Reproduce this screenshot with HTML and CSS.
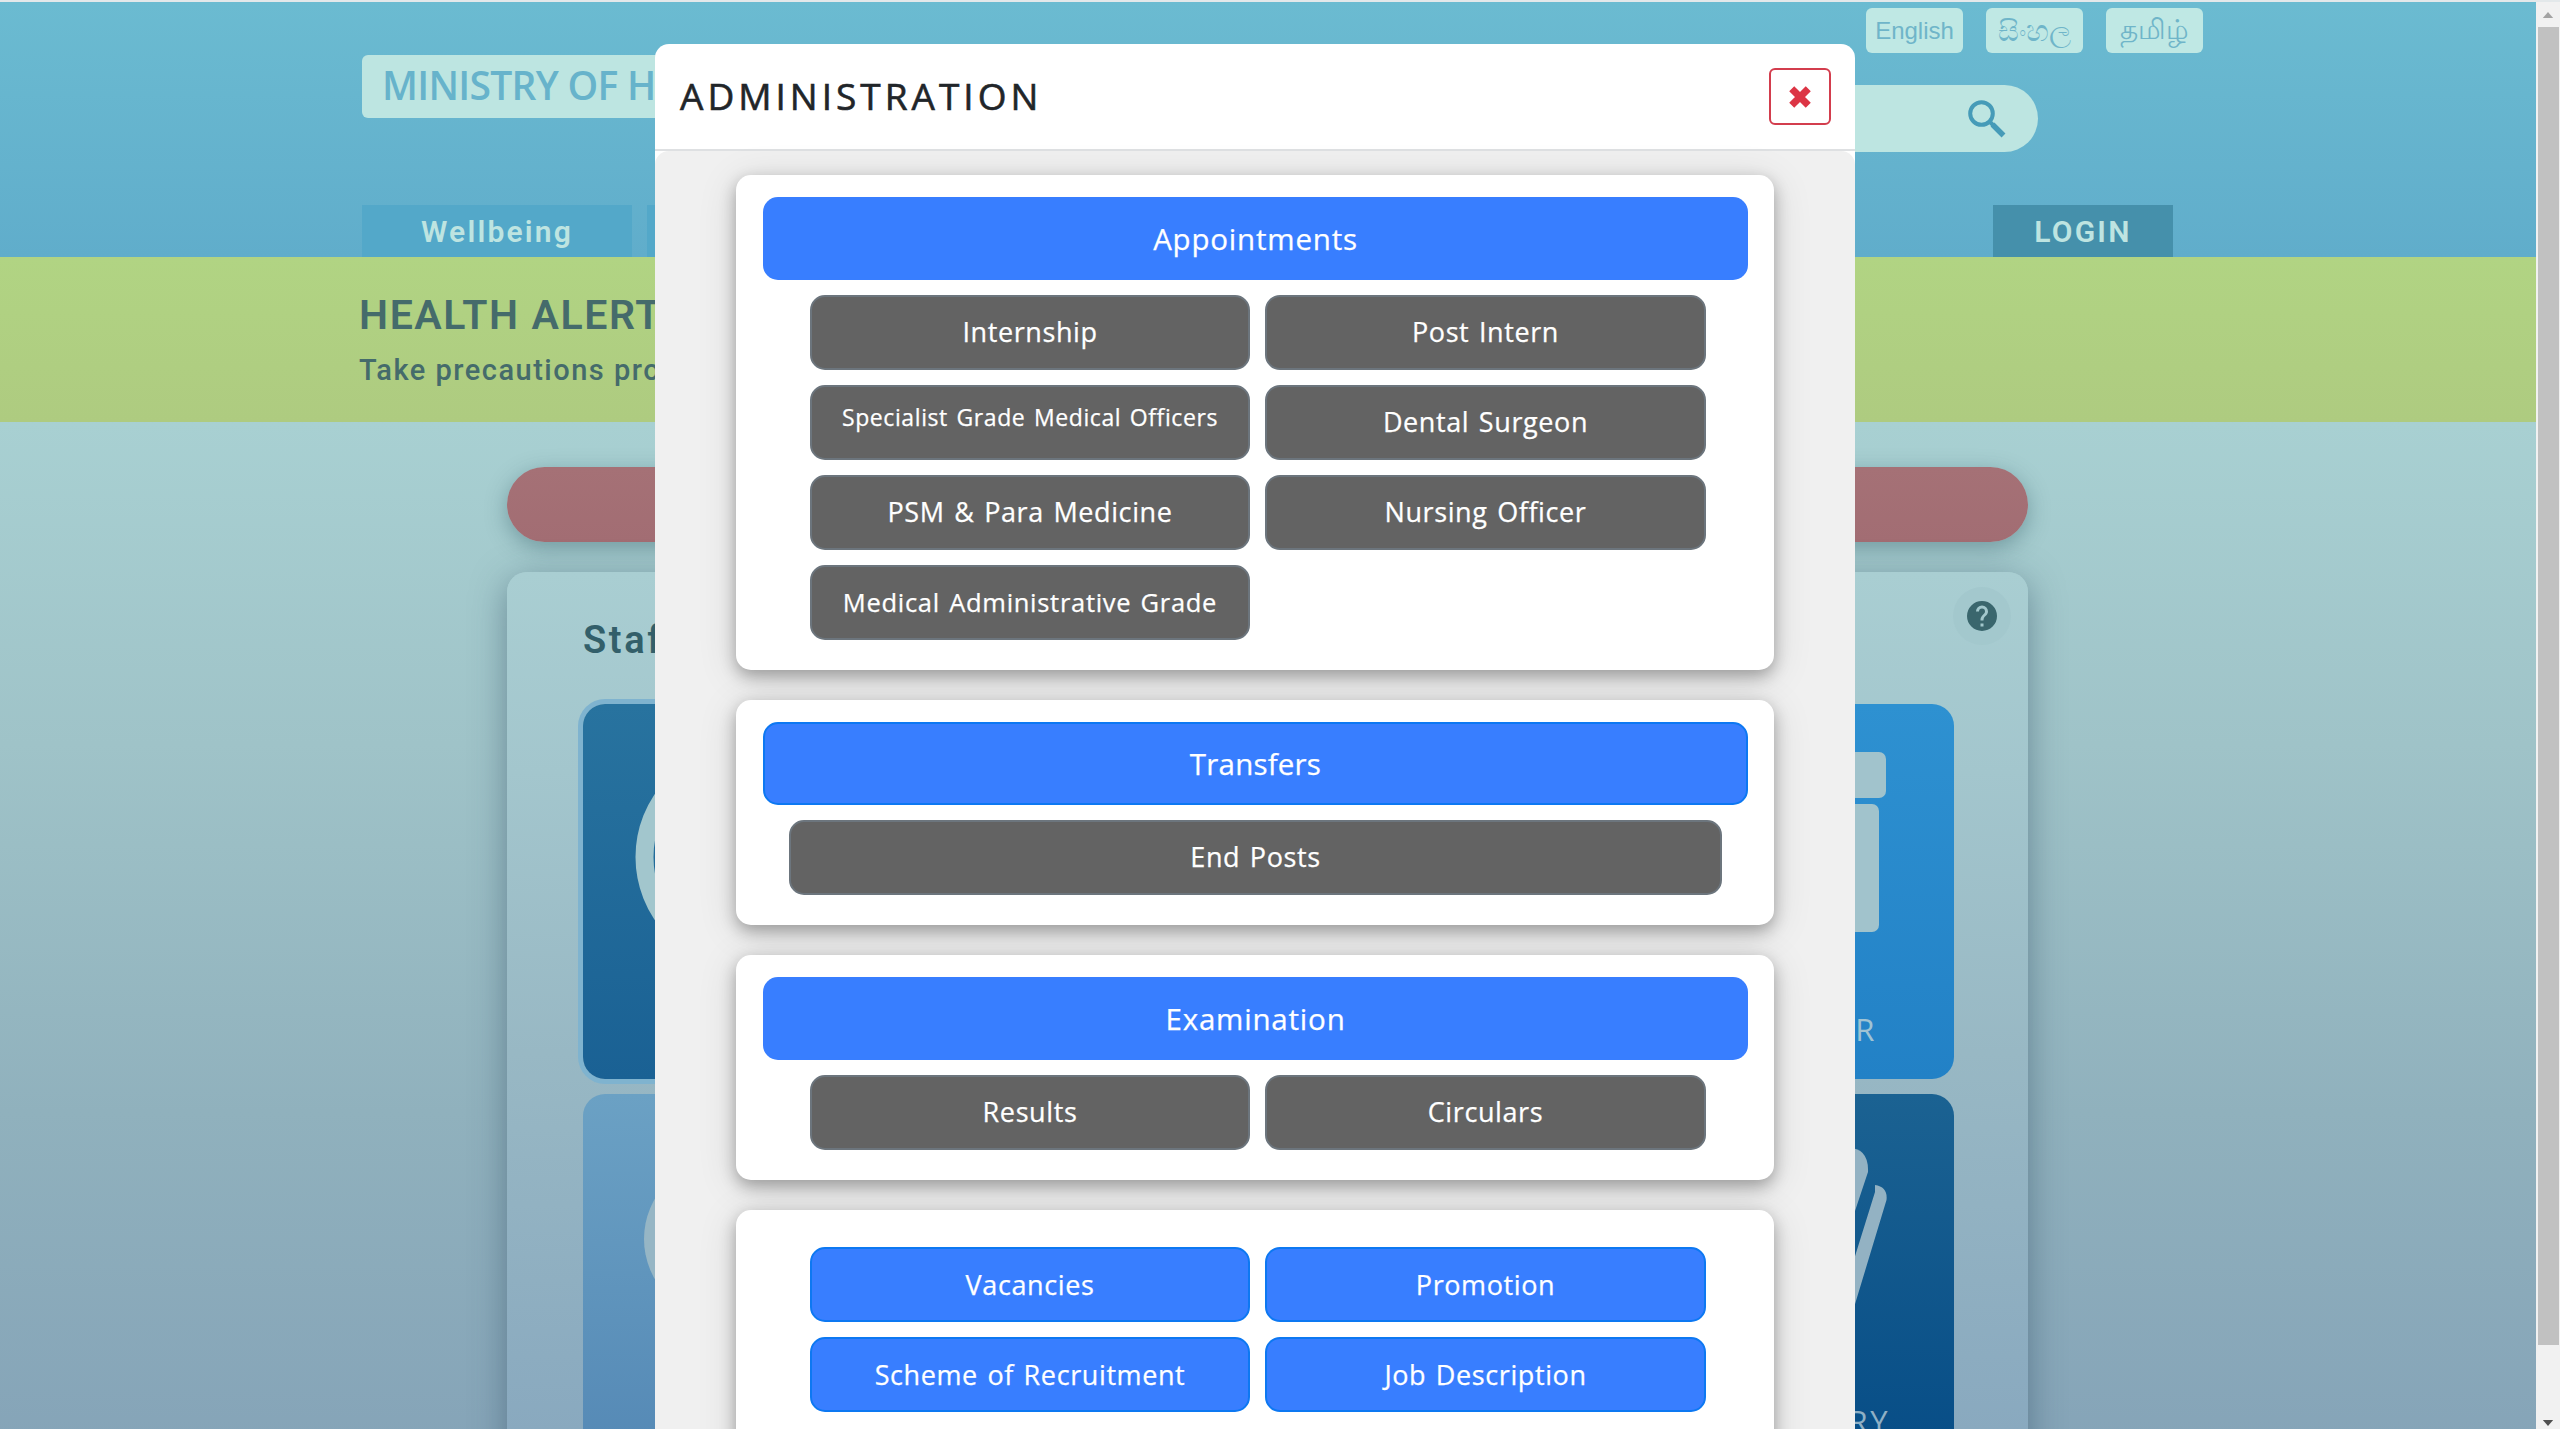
FILE: index.html
```html
<!DOCTYPE html>
<html lang="en">
<head>
<meta charset="utf-8">
<title>Ministry of Health</title>
<link rel="stylesheet" href="styles.css">
</head>
<body>
<div class="page">
  <header class="header">
    <div class="languages"><span class="lang lang-en">English</span><span class="lang lang-si">සිංහල</span><span class="lang lang-ta">தமிழ்</span></div>
    <div class="brand-row">
      <div class="brand">MINISTRY OF HEALTH</div>
      <div class="search"><svg viewBox="0 0 38 38"><circle cx="13.5" cy="13.5" r="11.3" fill="none" stroke-width="4"/><path d="M22.5 22.5l2.5 2.500" stroke-width="4"/><path d="M24.500 24.500l11 11" stroke-width="5.500"/></svg></div>
    </div>
    <nav class="tabs"><span class="tab">Wellbeing</span><span class="tab tab-rest"></span><span class="tab login">LOGIN</span></nav>
  </header>
  <section class="alert">
    <h2>HEALTH ALERTS</h2>
    <p>Take precautions provided</p>
  </section>
  <main class="content">
    <div class="notice"></div>
    <section class="panel">
      <div class="panel-head"><h3>Staff</h3><span class="help"><svg viewBox="0 0 24 24"><path d="M12 2a10 10 0 1 0 0 20 10 10 0 0 0 0-20zm1 17h-2v-2h2v2zm2.07-7.75-.9.92C13.45 12.9 13 13.5 13 15h-2v-.5c0-1.1.45-2.1 1.17-2.83l1.24-1.26c.37-.36.59-.86.59-1.41a2 2 0 1 0-4 0H8a4 4 0 1 1 8 0c0 .88-.36 1.68-.93 2.25z"/></svg></span></div>
      <div class="tiles">
        <div class="tile tile-navy tile-active"><svg class="tile-art" viewBox="0 0 450 375"><circle cx="165" cy="153" r="103.5" fill="none" stroke="currentColor" stroke-width="18"/></svg></div>
        <div class="tile tile-blue"><svg class="tile-art" viewBox="0 0 450 375"><rect x="180" y="48" width="202" height="46" rx="7"/><rect x="187" y="100" width="188" height="128" rx="7"/></svg><span class="tile-label">CALENDAR</span></div>
        <div class="tile tile-light"><svg class="tile-art" viewBox="0 0 450 375"><circle cx="141" cy="145" r="80"/></svg></div>
        <div class="tile tile-dark"><svg class="tile-art" viewBox="0 0 450 375"><path d="M340 54q25-2 24 24L330 180V60z"/><path d="M371 91q13 2 11.500 15L345 230l-12-10L371 98z"/></svg><span class="tile-label">DIRECTORY</span></div>
      </div>
    </section>
  </main>
</div>

<div class="modal" role="dialog">
  <div class="modal-head"><h1>ADMINISTRATION</h1><button class="close"><svg viewBox="0 0 22 22"><path d="M4.500 4.500l13 13M17.500 4.500l-13 13"/></svg></button></div>
  <div class="modal-body">
    <section class="card">
      <div class="title">Appointments</div>
      <div class="grid">
        <div class="btn">Internship</div><div class="btn">Post Intern</div>
        <div class="btn btn-small">Specialist Grade Medical Officers</div><div class="btn">Dental Surgeon</div>
        <div class="btn">PSM &amp; Para Medicine</div><div class="btn">Nursing Officer</div>
        <div class="btn btn-medium">Medical Administrative Grade</div>
      </div>
    </section>
    <section class="card">
      <div class="title title-edged">Transfers</div>
      <div class="grid grid-single"><div class="btn">End Posts</div></div>
    </section>
    <section class="card">
      <div class="title">Examination</div>
      <div class="grid"><div class="btn">Results</div><div class="btn">Circulars</div></div>
    </section>
    <section class="card card-links">
      <div class="grid">
        <div class="btn btn-blue">Vacancies</div><div class="btn btn-blue">Promotion</div>
        <div class="btn btn-blue">Scheme of Recruitment</div><div class="btn btn-blue">Job Description</div>
      </div>
    </section>
  </div>
</div>

<div class="scrollbar"><svg class="arrow arrow-up" viewBox="0 0 12 7"><path d="M6 0l6 7H0z"/></svg><div class="thumb"></div><svg class="arrow arrow-down" viewBox="0 0 12 7"><path d="M0 0h12L6 7z"/></svg></div>
</body>
</html>
```
FILE: styles.css
```css
* { box-sizing: border-box; }
body { margin: 0; height: 1429px; overflow: hidden; position: relative; font-family: "Open Sans", "Noto Sans", sans-serif; background: #eef2f3; }
h1, h2, h3, p { margin: 0; }

.page { width: 2536px; height: 1427px; margin-top: 2px; display: flex; flex-direction: column; overflow: hidden; }
body::before { content: ""; display: block; height: 2px; margin-bottom: -2px; background: #e3e8ea; }

.header { height: 255px; flex: none; display: flex; flex-direction: column; background: linear-gradient(#6bbbd1, #60adcb); }
.languages { display: flex; gap: 23px; padding: 6px 0 0 1866px; height: 53px; }
.lang { width: 97px; height: 45px; border-radius: 6px; background: #bfe8e4; color: #6fb5c9; display: flex; align-items: center; justify-content: center; font-size: 24px; line-height: 45px; }
.lang-en { font-family: "Liberation Sans", sans-serif; }
.lang-si { font-size: 29px; padding-bottom: 2px; }
.lang-ta { font-size: 28px; padding-bottom: 4px; }
.brand-row { display: flex; height: 100px; padding-left: 362px; }
.brand { width: 440px; height: 63px; border-radius: 6px; background: #bde5e1; color: #67b3cb; padding-left: 20px; line-height: 60px; font-size: 39px; font-weight: 600; letter-spacing: -.7px; white-space: nowrap; }
.search { width: 400px; height: 67px; margin: 30px 0 0 836px; border-radius: 0 34px 34px 0; background: #bde5e1; display: flex; align-items: center; justify-content: flex-end; padding-right: 32px; }
.search svg { width: 38px; height: 38px; fill: none; stroke: #469bb8; }
.tabs { display: flex; height: 52px; margin: 50px 0 0 362px; gap: 15px; }
.tab { width: 270px; background: #53a8c9; color: #bee4e1; font: 600 30px/54px Roboto, sans-serif; letter-spacing: 2.2px; text-align: center; }
.tab-rest { width: 700px; }
.login { width: 180px; margin-left: 631px; background: #4590ab; }

.alert { height: 165px; flex: none; padding: 35px 0 0 359px; background: linear-gradient(#b1d483, #aecb80); color: #456b6b; white-space: nowrap; }
.alert h2 { font: 600 41px/47px Roboto, sans-serif; letter-spacing: 1.6px; }
.alert p { font: 500 29px/34px Roboto, sans-serif; letter-spacing: 1.5px; margin-top: 14px; }

.content { flex: 1; display: flex; flex-direction: column; gap: 30px; padding: 45px 508px 0 507px; background: linear-gradient(#a8d0d2, #9fc3c8 28%, #90b1bd 60%, #819fb6); }
.notice { height: 75px; flex: none; border-radius: 38px; background: linear-gradient(#a57176, #a26d73); box-shadow: 0 6px 22px rgba(40, 80, 90, .4); }
.panel { height: 1000px; flex: none; border-radius: 20px; padding: 32px 74px 0 76px; background: linear-gradient(#a9ced2, #a3c6cd 20%, #98b8c4 48%, #89a9bf 86%); box-shadow: 0 8px 34px rgba(50, 80, 100, .5); }
.panel-head { height: 100px; display: flex; justify-content: space-between; }
.panel-head h3 { color: #335f6a; font: 600 38px/72px Roboto, sans-serif; letter-spacing: 2.6px; }
.help { width: 58px; height: 58px; margin: -17px -57px 0 0; border-radius: 50%; background: #a3c8cd; display: flex; align-items: center; justify-content: center; }
.help svg { width: 36px; height: 36px; fill: #3a666d; }
.tiles { display: grid; grid-template-columns: 450px 450px; grid-auto-rows: 375px; row-gap: 15px; justify-content: space-between; }
.tile { border-radius: 22px; overflow: hidden; display: grid; }
.tile > * { grid-area: 1 / 1; }
.tile-art { width: 450px; height: 375px; }
.tile-active { box-shadow: 0 0 0 5px #7fb3cf; }
.tile-navy { background: linear-gradient(#28739f, #1a6194); color: #a2c6cd; }
.tile-blue { background: linear-gradient(#2e91d1, #2281c6); fill: #a1c3cc; }
.tile-light { background: linear-gradient(#6ba1c4, #5488b5); fill: #96b6c5; }
.tile-dark { background: linear-gradient(#1b6292, #064c86); fill: #93b2c3; }
.tile-label { justify-self: end; align-self: end; font-size: 31px; line-height: 42px; letter-spacing: 2.5px; color: #a0c3d3; padding: 0 77px 29px 0; }
.tile-dark .tile-label { padding: 0 64px 27px 0; color: #8fb0c5; }

.modal { position: absolute; left: 655px; top: 44px; width: 1200px; height: 1385px; background: #fff; border-radius: 14px 14px 0 0; overflow: hidden; display: flex; flex-direction: column; }
.modal-head { height: 107px; flex: none; display: flex; align-items: center; justify-content: space-between; padding: 0 24px 0 25px; border-bottom: 2px solid #dee0e2; }
.modal-head h1 { font-size: 37px; font-weight: 400; -webkit-text-stroke: .6px; color: #212529; letter-spacing: 4px; padding-bottom: 2px; }
.close { width: 62px; height: 57px; border: 2px solid #d33d4d; border-radius: 6px; background: #fff; padding: 0; display: flex; align-items: center; justify-content: center; }
.close svg { width: 28px; height: 28px; fill: none; stroke: #dc3545; stroke-width: 5.600; }
.modal-body { flex: 1; background: #f0f0f0; border-radius: 14px 14px 0 0; padding: 24px 81px 0; display: flex; flex-direction: column; gap: 30px; }
.card { flex: none; background: #fff; border-radius: 15px; padding: 22px 26px 30px 27px; box-shadow: 0 6px 16px rgba(0, 0, 0, .3), 0 6px 40px rgba(0, 0, 0, .12); color: #fff; }
.title { height: 83px; border-radius: 15px; background: #387eff; font-size: 29.5px; line-height: 84px; letter-spacing: .8px; text-align: center; -webkit-text-stroke: .25px; }
.title-edged { border: 2px solid #0d78f2; line-height: 80px; letter-spacing: .2px; }
.grid { display: grid; grid-template-columns: 440px 441px; gap: 15px; padding: 15px 0 0 47px; }
.grid-single { grid-template-columns: 933px; padding-left: 26px; }
.btn { height: 75px; border: 2px solid #6c757d; border-radius: 15px; background: #636363; font-size: 27px; line-height: 70px; letter-spacing: .6px; word-spacing: 2px; text-align: center; white-space: nowrap; -webkit-text-stroke: .25px; }
.btn-small { font-size: 23px; line-height: 61px; letter-spacing: .6px; }
.btn-medium { font-size: 25.5px; letter-spacing: .7px; }
.btn-blue { background: #387eff; border-color: #0d78f2; line-height: 71px; }
.card-links { height: 300px; }

.scrollbar { position: absolute; right: 0; top: 2px; width: 24px; height: 1427px; background: #f1f1f1; display: flex; flex-direction: column; align-items: center; }
.thumb { width: 21px; height: 1318px; margin-top: 9px; background: #c1c1c1; }
.arrow { width: 12px; height: 6px; flex: none; fill: #a3a3a3; margin-top: 10px; }
.arrow-down { fill: #505050; margin-top: 75px; }
```
